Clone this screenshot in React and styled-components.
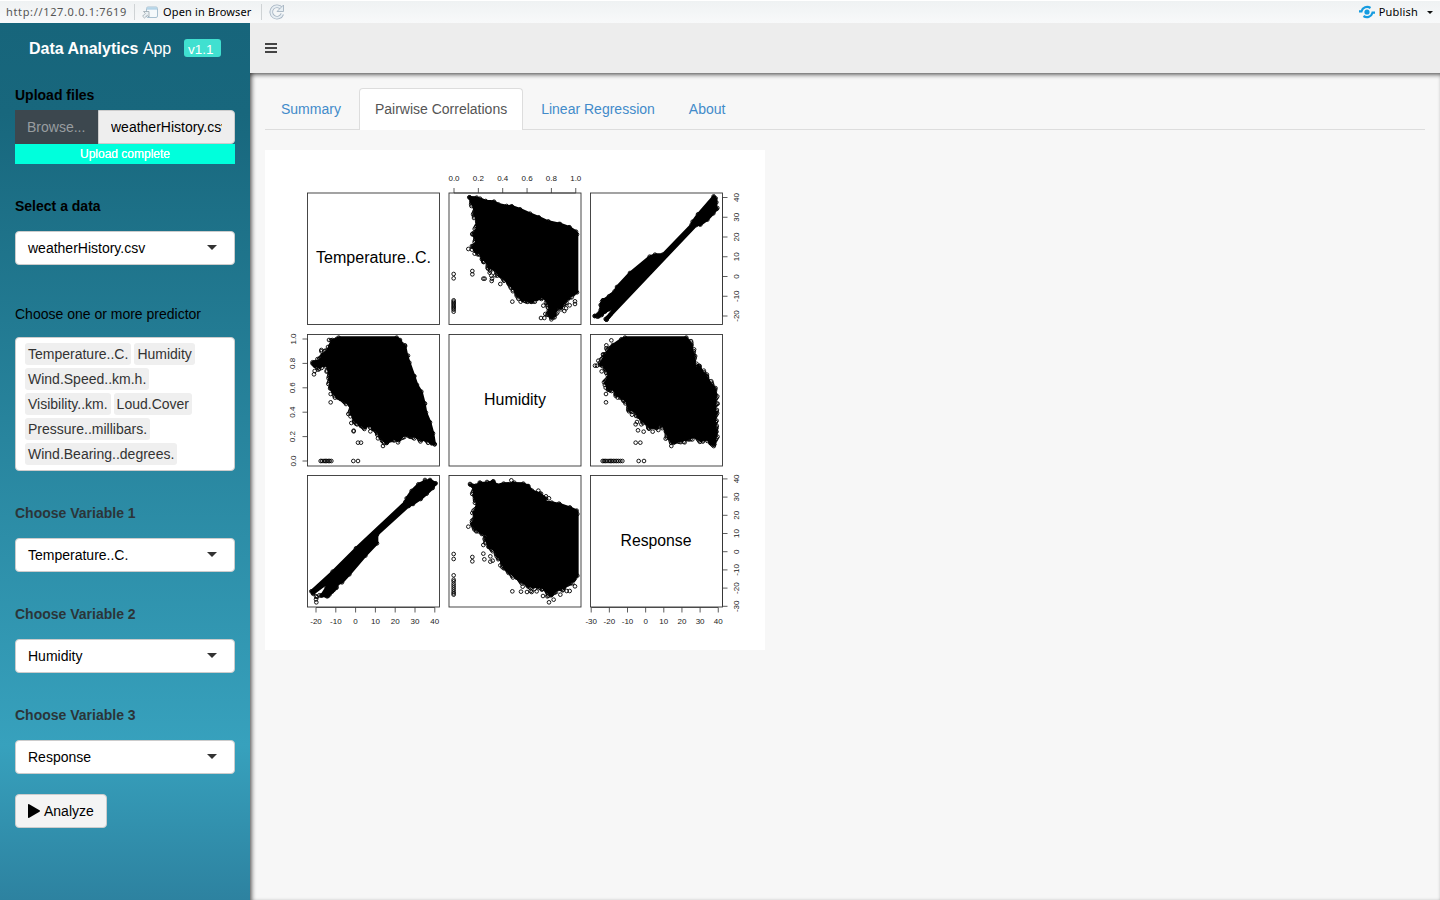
import React from "react";
import styled, { createGlobalStyle } from "styled-components";

const GlobalStyle = createGlobalStyle`
  * { box-sizing: border-box; }
  body {
    margin: 0;
    overflow: hidden;
    background: #f7f7f7;
    color: #333;
    font: 14px/20px "Liberation Sans", Arial, sans-serif;
  }
`;

const Page = styled.div`
  display: flex;
  flex-direction: column;
  height: 900px;
`;

const ViewerBar = styled.div`
  display: flex;
  align-items: center;
  flex: 0 0 23px;
  padding: 0 7px 0 6px;
  border-top: 1px solid #fff;
  background: linear-gradient(#eff2f3, #f8f9fa);
  font: 11px/20px "Noto Sans", "Open Sans", sans-serif;
  color: #000;
`;

const Address = styled.span`
  width: 121px;
  color: #555;
  letter-spacing: 0.65px;
  white-space: nowrap;
`;

const Divider = styled.i`
  width: 1px;
  height: 16px;
  margin: 0 7px 0 ${(p) => p.$gap}px;
  background: #cfd3d5;
`;

const ViewerButton = styled.span`
  display: flex;
  align-items: center;
  gap: ${(p) => p.$gap}px;
  margin-left: ${(p) => (p.$end ? "auto" : 0)};
  letter-spacing: ${(p) => p.$track || 0}px;
  white-space: nowrap;
`;

const MenuCaret = styled.i`
  margin-left: 5px;
  border: 3px solid transparent;
  border-top-color: #111;
  border-bottom: 0;
`;

const Body = styled.div`
  display: flex;
  flex: 1;
  min-height: 0;
`;

const Sidebar = styled.aside`
  width: 250px;
  flex: none;
  background: linear-gradient(#17657b 0, #18677d 90px, #37a1bd 722px, #2d82a0 877px);
`;

const Brand = styled.div`
  display: flex;
  align-items: center;
  height: 50px;
  padding: 1px 0 0 29px;
  color: #fff;
  font-size: 16px;
  letter-spacing: -0.28px;
  white-space: nowrap;
`;

const BrandStrong = styled.b`
  width: 110px;
  letter-spacing: 0;
  letter-spacing: -0.02px;
`;

const BrandLight = styled.span`
  margin-left: 4px;
  width: 28px;
  font-weight: 300;
  letter-spacing: -0.1px;
`;

const Version = styled.span`
  width: 37px;
  height: 18px;
  margin: -1px 0 0 13px;
  padding-left: 4px;
  border-radius: 3px;
  background: #40e0d0;
  font-size: 13.5px;
  line-height: 21px;
  letter-spacing: 0;
`;

const Form = styled.form`
  padding: 12px 15px 0;
`;

const Group = styled.div`
  margin-bottom: ${(p) => p.$after}px;
`;

const Label = styled.label`
  display: block;
  margin-bottom: ${(p) => p.$after ?? 15}px;
  color: ${(p) => (p.$soft ? "#2b3539" : "#000")};
  font-weight: ${(p) => (p.$plain ? 400 : 700)};
`;

const FileRow = styled.div`
  display: flex;
  height: 34px;
  line-height: 34px;
`;

const Browse = styled.span`
  width: 83px;
  padding-left: 12px;
  background: #3c474e;
  color: #989da0;
`;

const FileName = styled.span`
  flex: 1;
  padding: 0 12px;
  border: 1px solid #ccc;
  border-radius: 0 4px 4px 0;
  background: #eee;
  color: #000;
  line-height: 32px;
`;

const ClippedText = styled.span`
  display: block;
  overflow: hidden;
  width: 111px;
  white-space: nowrap;
`;

const Progress = styled.div`
  height: 20px;
  background: #00ffdc;
  color: #fff;
  font-size: 12px;
  text-align: center;
  text-shadow: 0 0 0.5px #fff;
`;

const Select = styled.div`
  display: flex;
  align-items: center;
  justify-content: space-between;
  height: 34px;
  padding: 0 17px 0 12px;
  border: 1px solid #ccc;
  border-radius: 4px;
  background: #fff;
  color: #000;
`;

const Caret = styled.i`
  margin-bottom: 1px;
  border: 5px solid transparent;
  border-top-color: #333;
  border-bottom: 0;
`;

const TokenBox = styled.div`
  display: flex;
  flex-wrap: wrap;
  align-content: flex-start;
  gap: 3px;
  height: 134px;
  padding: 5px 9px;
  border: 1px solid #ccc;
  border-radius: 4px;
  background: #fff;
`;

const Token = styled.span`
  height: 22px;
  padding: 1px 3px;
  border-radius: 3px;
  background: #efefef;
  color: #333;
`;

const AnalyzeButton = styled.button`
  display: flex;
  align-items: center;
  gap: 4px;
  width: 92px;
  height: 34px;
  padding: 0 0 0 12px;
  border: 1px solid #ccc;
  border-radius: 4px;
  background: #f4f4f4;
  color: #000;
  font: inherit;
`;

const Main = styled.main`
  display: flex;
  flex: 1;
  flex-direction: column;
  min-width: 0;
`;

const NavBar = styled.header`
  display: flex;
  align-items: center;
  flex: 0 0 50px;
  padding-left: 15px;
  background: #ededed;
`;

const Content = styled.section`
  flex: 1;
  padding: 15px;
  box-shadow: inset 4px 0 4px -2px rgba(0, 0, 0, 0.55), inset 0 4px 4px -2px rgba(0, 0, 0, 0.55);
`;

const Tabs = styled.nav`
  display: flex;
  gap: 2px;
  height: 42px;
  margin-bottom: 20px;
  border-bottom: 1px solid #ddd;
`;

const Tab = styled.a`
  height: 42px;
  padding: 10px 15px;
  border: 1px solid ${(p) => (p.$active ? "#ddd" : "transparent")};
  border-bottom: 0;
  border-radius: 4px 4px 0 0;
  background: ${(p) => (p.$active ? "#fff" : "transparent")};
  color: ${(p) => (p.$active ? "#555" : "#428bca")};
  white-space: nowrap;
`;

const Plot = styled.svg`
  display: block;
  background: #fff;
  font-family: "Liberation Sans", Arial, sans-serif;
`;

/* Each cloud: a dense outline plus the outlying observations, in thirds of a pixel.
   From vertex `rough` on, the outline is scattered with extra observations. */
const CLOUDS = [
  {
    x: 175, y: 15, rough: 17,
    edge: "88,97 110,98 120,101 137,108 162,110 175,118 200,123 215,124 240,133 270,146 296,157 325,170 360,177 388,187 408,200 411,208 411,382 400,388 385,396 374,410 362,428 350,422 344,450 334,457 326,450 330,425 320,402 303,394 290,402 275,408 262,404 247,404 233,390 220,368 206,355 193,340 180,332 165,312 148,306 142,290 128,282 121,262 107,258 98,246 110,235 107,217 101,209 110,197 113,170 105,148 104,128 94,112",
    loose: "41,327 41,340 97,318 97,328 130,341 134,341 156,341 155,348 181,357 130,291 85,252 97,208 104,266 113,268 108,257 89,97 160,113 215,125 296,159 325,170 357,177 388,187 217,410 242,410 256,408 264,409 272,410 310,422 303,459 313,459 316,447 326,438 334,463 341,452 350,433 363,433 373,438 378,430 389,421 405,417 405,409 383,403 154,332 151,318 144,311 166,331 149,323 229,380 237,391 249,392 318,413 41,406 41,410 41,414 41,418 41,422 41,426 41,430 41,434 41,440",
  },
  {
    x: 315, y: 35,
    edge: "401,34 407,40 409,52 407,68 410,72 400,85 382,104 361,119 349,120 80,404 77,402 112,361 102,362 91,373 75,380 65,390 55,394 44,393 56,386 62,375 62,360 69,346 87,334 104,319 111,306 150,264 209,215 225,209 248,209 335,119 338,110 354,88",
    loose: "45,393 52,395 57,393 60,386 64,378 67,384 65,359 66,350 69,346 75,377 83,371 90,365 98,359 93,331 79,404 82,399 86,395 91,389 412,69 402,38",
  },
  {
    x: 15, y: 175, rough: 17,
    edge: "157,45 170,42 176,38 350,38 360,45 367,58 375,64 381,93 388,113 402,153 411,180 424,200 433,235 438,263 450,292 459,325 464,357 455,355 440,343 425,344 412,335 391,332 372,329 356,345 340,340 320,353 303,337 294,319 280,312 269,295 256,306 240,298 226,286 215,267 212,242 195,227 173,218 152,190 151,159 146,131 140,118 119,125 105,122 99,115 123,105 129,91 143,76",
    loose: "98,116 103,121 108,111 104,138 102,148 115,134 124,75 124,79 128,90 147,45 153,46 144,66 152,61 140,140 152,207 152,184 152,232 181,222 205,267 214,294 222,291 221,317 221,319 232,298 243,303 254,306 271,319 294,340 309,363 306,347 320,354 354,352 234,353 243,353 220,408 234,408 122,408 126,408 132,408 136,408 140,408 145,408 149,408 154,408 375,61 384,92 403,154 435,236 464,358",
  },
  {
    x: 315, y: 175, rough: 3,
    edge: "124,43 135,38 319,38 325,48 333,60 340,94 346,136 356,124 375,152 383,166 403,190 407,209 403,244 407,264 403,300 408,320 403,358 391,354 385,341 363,345 344,334 326,340 305,345 285,350 277,351 268,339 259,319 248,298 239,290 230,307 212,307 199,293 190,287 175,275 169,259 149,253 138,225 128,218 112,210 103,192 86,193 78,174 88,148 78,129 69,117 62,119 74,93 84,82 99,60",
    loose: "94,46 79,61 79,70 69,88 55,107 60,113 45,122 51,122 65,139 83,151 79,173 77,188 89,195 78,207 78,232 108,208 121,218 147,259 156,269 179,270 171,291 167,298 184,298 174,316 191,320 205,309 218,320 235,315 257,341 274,363 282,353 314,352 369,346 402,358 167,353 181,353 342,92 358,123 380,156 413,236 407,290 408,310 407,331 176,408 192,408 68,408 72,408 76,408 81,408 87,408 91,408 95,408 100,408 105,408 110,408 115,408 121,408 127,408",
  },
  {
    x: 35, y: 320,
    edge: "375,34 390,30 407,40 398,54 380,71 362,87 339,102 326,108 231,194 231,220 196,257 148,313 126,337 112,342 108,354 89,373 81,379 64,377 80,352 82,339 39,371 34,364 98,305 168,235 316,96 320,85 335,63 355,43",
    loose: "375,30 405,41 38,365 42,361 47,357 52,353 57,348 48,379 51,381 48,388 49,397 58,376 65,376 75,371 84,378 96,365 101,360 110,352",
    shift: [-35, 0],
  },
  {
    x: 175, y: 320, rough: 20,
    edge: "91,44 108,47 121,39 143,39 160,34 171,46 191,41 220,40 250,41 264,48 276,62 300,71 318,86 310,95 335,98 359,103 390,113 410,122 412,132 412,317 401,330 383,340 372,353 356,355 345,363 333,376 321,363 306,351 280,350 265,347 249,335 230,323 208,306 194,294 187,276 174,257 165,240 147,230 139,208 149,196 127,190 108,174 97,163 106,148 103,129 112,112 109,88 103,76 103,54",
    loose: "90,42 98,48 119,38 141,36 159,35 214,31 223,38 265,49 295,62 303,71 318,79 327,85 308,86 357,101 389,113 97,129 85,170 96,158 106,175 109,184 115,184 134,208 130,225 130,251 133,268 97,261 97,274 151,275 158,272 151,259 168,252 181,286 192,295 177,265 217,364 243,365 261,366 272,363 275,366 290,364 309,378 322,379 327,397 341,389 333,370 361,374 368,361 380,363 389,363 405,349 391,338 405,325 248,350 239,330 41,252 41,267 41,316 41,329 41,334 41,341 41,347 41,353 41,359 41,365 41,370 41,374",
  },
];

const points = (list) => list.split(" ").map((pair) => pair.split(",").map(Number));

const scatter = (edge, from) => {
  if (from === undefined) return [];
  const out = [];
  for (let i = from; i < edge.length - 1; i += 1) {
    const [ax, ay] = edge[i];
    const [bx, by] = edge[i + 1];
    const length = Math.hypot(bx - ax, by - ay);
    const count = Math.ceil(length / 5);
    for (let k = 0; k < count; k += 1) {
      const t = k / count;
      const push = ((i * 37 + k * 53) % 11) - 3.5;
      out.push([ax + (bx - ax) * t + ((by - ay) / length) * push, ay + (by - ay) * t - ((bx - ax) / length) * push]);
    }
  }
  return out;
};

const Cloud = ({ x, y, edge, loose, rough }) => (
  <g transform={`translate(${x} ${y}) scale(0.33333)`} stroke="#000" strokeWidth="2.7">
    <polygon points={edge} strokeWidth="8" strokeLinejoin="round" />
    <g fill="none">
      {[...points(edge), ...points(loose), ...scatter(points(edge), rough)].map(([cx, cy], i) => (
        <circle key={i} cx={cx} cy={cy} r="5.5" />
      ))}
    </g>
  </g>
);

const FRAME_X = [42.5, 184, 325.5];
const FRAME_Y = [43, 184.5, 325.5];
const range = (from, to, step, digits = 0) => {
  const out = [];
  for (let v = from; v <= to + step / 10; v += step) out.push((Math.abs(v) < 1e-9 ? 0 : v).toFixed(digits));
  return out;
};

const AXES = [
  { side: "top", at: 43, start: 189, step: 24.35, labels: range(0, 1, 0.2, 1) },
  { side: "left", at: 42.5, start: 311, step: -24.4, labels: range(0, 1, 0.2, 1) },
  { side: "bottom", at: 457.5, start: 51, step: 19.8, labels: range(-20, 40, 10) },
  { side: "bottom", at: 457.5, start: 326.2, step: 18.15, labels: range(-30, 40, 10) },
  { side: "right", at: 457.5, start: 166, step: -19.75, labels: range(-20, 40, 10) },
  { side: "right", at: 457.5, start: 456.3, step: -18.2, labels: range(-30, 40, 10) },
];

const Axis = ({ side, at, start, step, labels }) => {
  const horizontal = side === "top" || side === "bottom";
  const dir = side === "top" || side === "left" ? -1 : 1;
  const end = start + step * (labels.length - 1);
  return (
    <g stroke="#333" strokeWidth="0.8">
      {horizontal ? <path d={`M${start} ${at}H${end}`} /> : <path d={`M${at} ${start}V${end}`} />}
      {labels.map((label, i) => {
        const p = start + step * i;
        const tick = horizontal ? `M${p} ${at}v${5 * dir}` : `M${at} ${p}h${5 * dir}`;
        const tx = horizontal ? p : at + (dir < 0 ? -12 : 16.5);
        const ty = horizontal ? at + (dir < 0 ? -12 : 16.5) : p;
        return (
          <g key={label}>
            <path d={tick} />
            <text
              x={tx} y={ty} fontSize="8" textAnchor="middle" fill="#222" stroke="none"
              transform={horizontal ? undefined : `rotate(-90 ${tx} ${ty})`}
            >
              {label}
            </text>
          </g>
        );
      })}
    </g>
  );
};

const PairsPlot = () => (
  <Plot width="500" height="500" viewBox="0 0 500 500">
    {CLOUDS.map((cloud, i) => <Cloud key={i} {...cloud} />)}
    <g fill="none" stroke="#333" strokeWidth="0.9">
      {FRAME_Y.map((y) => FRAME_X.map((x) => <rect key={`${x}-${y}`} x={x} y={y} width="132" height="131.5" />))}
    </g>
    {AXES.map((axis, i) => <Axis key={i} {...axis} />)}
    <g fontSize="16" textAnchor="middle">
      <text x="108.5" y="113" textLength="115" lengthAdjust="spacingAndGlyphs">Temperature..C.</text>
      <text x="250" y="255" textLength="62" lengthAdjust="spacingAndGlyphs">Humidity</text>
      <text x="391" y="396" textLength="71" lengthAdjust="spacingAndGlyphs">Response</text>
    </g>
  </Plot>
);

const OpenIcon = () => (
  <svg width="16" height="15" viewBox="0 0 16 15" fill="none">
    <rect x="4.5" y="2" width="11" height="10.5" rx="1.5" fill="#f5f9fb" stroke="#a8c0d0" />
    <path d="M5 3.500h10" stroke="#b5d5e8" strokeWidth="2.400" />
    <path d="M1.500 6.500H7v5.500L5.300 10.300 2.500 13 .6 11.200l2.700-2.800z" fill="#e9eff2" stroke="#9aa7af" strokeWidth=".8" />
  </svg>
);

const RefreshIcon = () => (
  <svg width="16" height="16" viewBox="0 0 16 16" fill="none">
    <path d="M12.500 4.500A5.700 5.700 0 1 0 13.300 10" stroke="#a6b4c2" strokeWidth="3.600" />
    <path d="M12.500 4.500A5.700 5.700 0 1 0 13.300 10" stroke="#e7eef3" strokeWidth="1.900" />
    <path d="M14.500 1v6.500H8z" fill="#e7eef3" stroke="#a6b4c2" strokeWidth=".9" />
  </svg>
);

const PublishIcon = () => (
  <svg width="16" height="14" viewBox="0 0 16 14" fill="none" stroke="#159be0" strokeWidth="2.200">
    <circle cx="8" cy="7" r="2.600" fill="#159be0" stroke="none" />
    <path d="M0 6.300h2.500C3.500 2.500 8 .5 11.500 3" />
    <path d="M16 7.700h-2.500C12.500 11.500 8 13.500 4.500 11" />
  </svg>
);

const Picker = ({ label, value, after, soft }) => (
  <Group $after={after}>
    <Label $soft={soft}>{label}</Label>
    <Select>{value}<Caret /></Select>
  </Group>
);

const PREDICTORS = [
  "Temperature..C.", "Humidity", "Wind.Speed..km.h.", "Visibility..km.",
  "Loud.Cover", "Pressure..millibars.", "Wind.Bearing..degrees.",
];

export default function App() {
  return (
    <Page>
      <GlobalStyle />
      <ViewerBar>
        <Address>http://127.0.0.1:7619</Address>
        <Divider $gap={7} />
        <ViewerButton $gap={5} $track={0.15}><OpenIcon />Open in Browser</ViewerButton>
        <Divider $gap={9} />
        <RefreshIcon />
        <ViewerButton $gap={4} $track={0.18} $end><PublishIcon />Publish<MenuCaret /></ViewerButton>
      </ViewerBar>
      <Body>
        <Sidebar>
          <Brand>
            <BrandStrong>Data Analytics</BrandStrong><BrandLight>App</BrandLight><Version>v1.1</Version>
          </Brand>
          <Form>
            <Group $after={32}>
              <Label $after={5}>Upload files</Label>
              <FileRow>
                <Browse>Browse...</Browse>
                <FileName><ClippedText>weatherHistory.csv</ClippedText></FileName>
              </FileRow>
              <Progress>Upload complete</Progress>
            </Group>
            <Picker label="Select a data" value="weatherHistory.csv" after={39} />
            <Group $after={32}>
              <Label $plain $after={13}>Choose one or more predictor</Label>
              <TokenBox>{PREDICTORS.map((name) => <Token key={name}>{name}</Token>)}</TokenBox>
            </Group>
            <Picker soft label="Choose Variable 1" value="Temperature..C." after={32} />
            <Picker soft label="Choose Variable 2" value="Humidity" after={32} />
            <Picker soft label="Choose Variable 3" value="Response" after={20} />
            <AnalyzeButton type="button">
              <svg width="12" height="14" viewBox="0 0 12 14">
                <path d="M0 1Q0-.3 1.200.3L11.500 6.300Q12.500 7 11.500 7.700L1.200 13.700Q0 14.300 0 13z" />
              </svg>
              Analyze
            </AnalyzeButton>
          </Form>
        </Sidebar>
        <Main>
          <NavBar>
            <svg width="12" height="12" viewBox="0 0 12 12" fill="none" stroke="#444" strokeWidth="2">
              <path d="M0 2h12M0 6h12M0 10h12" />
            </svg>
          </NavBar>
          <Content>
            <Tabs>
              <Tab>Summary</Tab>
              <Tab $active>Pairwise Correlations</Tab>
              <Tab>Linear Regression</Tab>
              <Tab>About</Tab>
            </Tabs>
            <PairsPlot />
          </Content>
        </Main>
      </Body>
    </Page>
  );
}
